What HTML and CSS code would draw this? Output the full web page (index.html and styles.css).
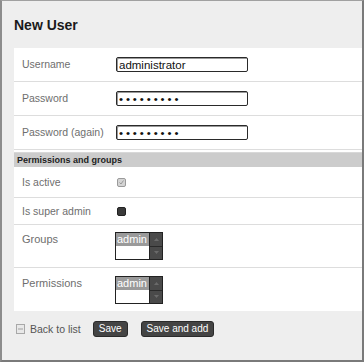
FILE: index.html
```
<!DOCTYPE html>
<html lang="en">
<head>
    <meta charset="UTF-8">
    <title>New User</title>
    <link rel="stylesheet" href="styles.css">
</head>
<body>
    <div class="page">
        <h1>New User</h1>

        <div class="panel">
            <div class="row">
                <label>Username</label>
                <input type="text" value="administrator">
            </div>
            <div class="row">
                <label>Password</label>
                <input type="password" class="pass" value="secret123">
            </div>
            <div class="row">
                <label>Password (again)</label>
                <input type="password" class="pass" value="secret123">
            </div>

            <div class="section">Permissions and groups</div>

            <div class="row row-active">
                <label>Is active</label>
                <span class="check check-light">
                    <svg width="9" height="9" viewBox="0 0 9 9"><path d="M2.5 4.5 L4 6 L6.5 2.5" fill="none" stroke="#999" stroke-width="1"/></svg>
                </span>
            </div>
            <div class="row row-super">
                <label>Is super admin</label>
                <span class="check check-dark"></span>
            </div>
            <div class="row row-list">
                <label>Groups</label>
                <div class="listbox">
                    <div class="options">
                        <div class="option selected">admin</div>
                    </div>
                    <div class="scroll">
                        <span class="scroll-btn"><svg width="5" height="3" viewBox="0 0 5 3"><path d="M0 3 L2.5 0 L5 3 Z" fill="#6a6a6a"/></svg></span>
                        <span class="scroll-btn"><svg width="5" height="3" viewBox="0 0 5 3"><path d="M0 0 L2.5 3 L5 0 Z" fill="#6a6a6a"/></svg></span>
                    </div>
                </div>
            </div>
            <div class="row row-list last">
                <label>Permissions</label>
                <div class="listbox">
                    <div class="options">
                        <div class="option selected">admin</div>
                    </div>
                    <div class="scroll">
                        <span class="scroll-btn"><svg width="5" height="3" viewBox="0 0 5 3"><path d="M0 3 L2.5 0 L5 3 Z" fill="#6a6a6a"/></svg></span>
                        <span class="scroll-btn"><svg width="5" height="3" viewBox="0 0 5 3"><path d="M0 0 L2.5 3 L5 0 Z" fill="#6a6a6a"/></svg></span>
                    </div>
                </div>
            </div>
        </div>

        <div class="actions">
            <a class="back" href="#">
                <svg width="9" height="10" viewBox="0 0 9 10"><rect x="0.5" y="0.5" width="8" height="9" fill="#e8e8e8" stroke="#a8a8a8"/><path d="M2 5 H7" stroke="#a0a0a0" stroke-width="1"/></svg>
                Back to list
            </a>
            <button>Save</button>
            <button>Save and add</button>
        </div>
    </div>
</body>
</html>
```

FILE: styles.css
```
* {
    box-sizing: border-box;
    font-family: "Liberation Sans", Arial, sans-serif;
}

body {
    margin: 0;
    background: #eeeeee;
}

.page {
    height: 362px;
    padding-left: 12px;
    border-top: 1px solid #a0a0a0;
    border-left: 2px solid #8c8c8c;
    border-right: 2px solid #7a7a7a;
    border-bottom: 2px solid #7a7a7a;
    background: #eeeeee;
}

h1 {
    margin: 0;
    height: 47px;
    padding-top: 16px;
    font-size: 14px;
    line-height: 16px;
    color: #1a1a1a;
}

.panel {
    background: white;
}

.row {
    display: flex;
    align-items: center;
    height: 34px;
    padding-left: 8px;
    border-bottom: 1px solid #dddddd;
}

.row label {
    width: 94px;
    margin-top: -2px;
    font-size: 10.5px;
    line-height: 14px;
    color: #6e6e6e;
}

input {
    width: 132px;
    height: 15px;
    margin: 0;
    padding: 0 2px;
    border: 1px solid #2a2a2a;
    border-radius: 2px;
    box-shadow: inset 1px 1px 0 #9a9a9a;
    font-size: 11.5px;
    color: #111;
    outline: none;
}

.pass {
    letter-spacing: 2.9px;
    font-size: 11.5px;
}

.section {
    height: 15px;
    margin-top: 2px;
    padding-left: 3px;
    background: #cccccc;
    border-top: 1px solid #d8d8d8;
    font-size: 9px;
    font-weight: bold;
    line-height: 14px;
    color: #222;
}

.row-active {
    height: 31px;
}

.row-super {
    height: 27px;
}

.row-active label,
.row-super label {
    margin-top: 0;
}

.check {
    display: block;
    width: 9px;
    height: 9px;
    margin-left: 1px;
    border-radius: 2px;
}

.check svg {
    display: block;
}

.check-light {
    background: #d4d4d4;
    border: 1px solid #9a9a9a;
}

.check-light svg {
    margin: -1px;
}

.check-dark {
    background: #3a3a3a;
    border: 1px solid #222;
}

.row-list {
    align-items: flex-start;
    height: 43px;
    padding-top: 7px;
}

.row-list.last {
    height: 43px;
    padding-top: 8px;
    border-bottom: none;
}

.row-list label {
    margin-top: 0;
    font-size: 11px;
}

.listbox {
    display: flex;
    width: 48px;
    height: 28px;
    margin-left: -1px;
    border: 1px solid #222;
    background: white;
}

.options {
    flex: 1;
}

.option {
    height: 13px;
    padding-left: 1px;
    font-size: 11px;
    line-height: 12px;
    color: white;
}

.option.selected {
    background: #9a9a9a;
}

.scroll {
    display: flex;
    flex-direction: column;
    width: 13px;
    background: #3c3c3c;
    border-left: 1px solid #222;
}

.scroll-btn {
    flex: 1;
    display: flex;
    align-items: center;
    justify-content: center;
    border-bottom: 1px solid #2a2a2a;
    background: #4a4a4a;
}

.scroll-btn:last-child {
    border-bottom: none;
}

.scroll-btn svg {
    display: block;
}

.actions {
    display: flex;
    align-items: center;
    padding-top: 10px;
    padding-left: 2px;
}

.back {
    display: flex;
    align-items: center;
    gap: 5px;
    margin-right: 12px;
    font-size: 10.5px;
    color: #555;
    text-decoration: none;
}

.back svg {
    display: block;
}

button {
    height: 16px;
    margin: 0 13px 0 0;
    padding: 0 5px;
    background: #444;
    border: 1px solid #2a2a2a;
    border-radius: 3px;
    font-size: 10px;
    line-height: 14px;
    color: white;
}
```
